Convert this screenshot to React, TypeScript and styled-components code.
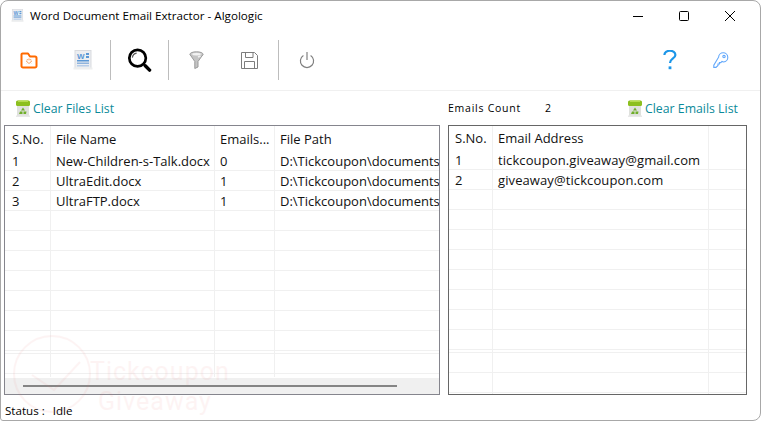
import React from "react";
import styled, { createGlobalStyle } from "styled-components";

const GlobalStyle = createGlobalStyle`
  html, body { margin: 0; padding: 0; background: #fff; }
  body { font-family: "Open Sans", "Noto Sans", sans-serif; color: #000; }
`;

const files = [
  ["1", "New-Children-s-Talk.docx", "0", "D:\\Tickcoupon\\documents"],
  ["2", "UltraEdit.docx", "1", "D:\\Tickcoupon\\documents"],
  ["3", "UltraFTP.docx", "1", "D:\\Tickcoupon\\documents"],
];

const emails = [
  ["1", "tickcoupon.giveaway@gmail.com"],
  ["2", "giveaway@tickcoupon.com"],
];

// row heights of the empty grid, the short row is how the grid really looks
const leftRows = [20, 20, 20, 20, 20, 20, 20, 20, 20, 20, 3, 20, 20];
const rightRows = [20, 20, 20, 20, 20, 20, 20, 20, 20, 20, 3, 20, 20, 20];
const leftCols = [46, 164, 60];
const rightCols = [44, 216, 52];

const DocIcon = ({ size = 20 }: { size?: number }) => (
  <svg width={size} height={size} viewBox="0 0 20 20">
    <rect x="2" y="0.5" width="16" height="18" fill="#eceef1" stroke="#d9dbdf" />
    <rect x="0.5" y="17.5" width="19" height="2" fill="#eeefef" />
    <text x="4" y="9" fontSize="8" fontWeight="700" fontFamily="Liberation Sans" fill="#5b98d6">W</text>
    <rect x="13" y="3" width="3" height="2" fill="#5b98d6" />
    <rect x="13" y="6" width="3" height="2" fill="#5b98d6" />
    <rect x="4" y="10" width="12" height="1.5" fill="#5b98d6" />
    <rect x="4" y="12.5" width="12" height="1.5" fill="#8fb4dd" />
    <rect x="4" y="15" width="12" height="1.5" fill="#b7cde8" />
  </svg>
);

const FolderIcon = () => (
  <svg width="18" height="17" viewBox="0 0 18 17" fill="none">
    <path
      d="M2.5 1.5H8L10 4.5H15A1.5 1.5 0 0 1 16.5 6V14A1.5 1.5 0 0 1 15 15.5H3A1.5 1.5 0 0 1 1.5 14V2.5A1 1 0 0 1 2.5 1.5Z"
      stroke="#ff6a00"
      strokeWidth="2"
      strokeLinejoin="round"
    />
    <path
      d="M9 6.5V8M9 10.5V12M6 9.2H7.5M10.5 9.2H12M7 7.2L8 8.2M10 10.2L11 11.2M11 7.2L10 8.2M8 10.2L7 11.2"
      stroke="#f4934c"
      strokeWidth="1"
    />
  </svg>
);

const SearchIcon = () => (
  <svg width="25" height="25" viewBox="0 0 26 26" fill="none">
    <circle cx="11" cy="10.5" r="8.6" stroke="#000" strokeWidth="2.8" />
    <path d="M5.6 10A5.4 5.4 0 0 1 10 5.4" stroke="#555" strokeWidth="1.2" />
    <path d="M17.5 17L19 18.5" stroke="#000" strokeWidth="1.6" />
    <path d="M19 18.5L23.5 23" stroke="#000" strokeWidth="3.6" strokeLinecap="round" />
  </svg>
);

const FunnelIcon = () => (
  <svg width="15" height="19" viewBox="0 0 15 19" fill="none">
    <ellipse cx="7.5" cy="3.2" rx="6.5" ry="2.4" fill="#d2d2d2" stroke="#9a9a9a" />
    <path d="M1 3.5L5.8 10.5V17.5L9 16V10.5L14 3.5" fill="#c4c4c4" stroke="#9a9a9a" />
    <path d="M9 6L11.5 5" stroke="#efefef" strokeWidth="1.5" />
    <ellipse cx="7.5" cy="3.2" rx="4.2" ry="1.2" fill="#f2f2f2" />
  </svg>
);

const SaveIcon = () => (
  <svg width="17" height="17" viewBox="0 0 17 17" fill="none" stroke="#7d7d7d" strokeWidth="1">
    <path d="M0.5 0.5H13.5L16.5 3.5V16.5H0.5Z" />
    <path d="M4.5 0.5V5.5H12V0.5" />
    <path d="M3.5 16.5V9.5H13.5V16.5" />
  </svg>
);

const PowerIcon = () => (
  <svg width="16" height="18" viewBox="0 0 16 18" fill="none" stroke="#808080" strokeWidth="1.2">
    <path d="M8 1V9" />
    <path d="M4.4 4.4A6.6 6.6 0 1 0 11.6 4.4" />
  </svg>
);

const HelpIcon = () => (
  <svg width="14" height="20" viewBox="0 0 14 20" fill="none">
    <path
      d="M1.4 5A5.4 4.2 0 0 1 12.4 5C12.4 8.4 7 8.6 7 13"
      stroke="#1c96e8"
      strokeWidth="2.2"
    />
    <rect x="5.6" y="16.4" width="2.8" height="2.8" fill="#1c96e8" />
  </svg>
);

const KeyIcon = () => (
  <svg width="16" height="16" viewBox="0 0 16 16" fill="none" stroke="#62a8fb" strokeWidth="1.1">
    <path d="M5.6 5.2A4.6 4.6 0 1 1 10.6 10L9 9.4L7.8 10.6H6.4V12H5V13.4L3 15.4H0.8V13.2Z" />
    <circle cx="11" cy="4.6" r="1.2" />
  </svg>
);

const BinIcon = () => (
  <svg width="16" height="17" viewBox="0 0 16 17">
    <rect x="2" y="5" width="12" height="11" fill="#dfe1dd" />
    <rect x="1" y="15.5" width="14" height="1.5" fill="#e8e8e8" />
    <rect x="1" y="0.5" width="14" height="5.5" rx="1.5" fill="#8cbf1f" />
    <rect x="3" y="0.5" width="10" height="1.5" fill="#b5dc4e" />
    <path d="M8 7.5L10 10.5H6ZM5 11.5H7.5V14H4ZM8.5 11.5H11.5L11 14H8.5Z" fill="#6fae2a" />
  </svg>
);

const WindowMinIcon = () => (
  <svg width="10" height="10" viewBox="0 0 10 10">
    <path d="M0 5.5H10" stroke="#000" strokeWidth="1" />
  </svg>
);

const WindowMaxIcon = () => (
  <svg width="10" height="10" viewBox="0 0 10 10" fill="none">
    <rect x="0.5" y="0.5" width="9" height="9" rx="1" stroke="#000" strokeWidth="1" />
  </svg>
);

const WindowCloseIcon = () => (
  <svg width="10" height="10" viewBox="0 0 10 10">
    <path d="M0 0L10 10M10 0L0 10" stroke="#000" strokeWidth="1" />
  </svg>
);

const App: React.FC = () => {
  return (
    <Frame>
      <GlobalStyle />
      <TitleBar>
        <TitleIcon>
          <DocIcon size={13} />
        </TitleIcon>
        <TitleText>Word Document Email Extractor - Algologic</TitleText>
        <WindowControls>
          <WindowButton><WindowMinIcon /></WindowButton>
          <WindowButton><WindowMaxIcon /></WindowButton>
          <WindowButton><WindowCloseIcon /></WindowButton>
        </WindowControls>
      </TitleBar>

      <Toolbar>
        <ToolButton $w={54}><FolderIcon /></ToolButton>
        <ToolButton $w={53}><DocIcon /></ToolButton>
        <Separator />
        <ToolButton $w={55}><SearchIcon /></ToolButton>
        <Separator />
        <ToolButton $w={52}><FunnelIcon /></ToolButton>
        <ToolButton $w={55}><SaveIcon /></ToolButton>
        <Separator />
        <ToolButton $w={54}><PowerIcon /></ToolButton>
        <ToolSpacer />
        <ToolButton $w={51}><HelpIcon /></ToolButton>
        <ToolButton $w={51}><KeyIcon /></ToolButton>
      </Toolbar>

      <ActionRow>
        <ClearLink>
          <BinIcon />
          <span>Clear Files List</span>
        </ClearLink>
        <CountGroup>
          <CountLabel>Emails Count</CountLabel>
          <CountValue>2</CountValue>
          <ClearLink>
            <BinIcon />
            <span>Clear Emails List</span>
          </ClearLink>
        </CountGroup>
      </ActionRow>

      <Panels>
        <ListBox $border="#85858d">
          <HeaderRow $h={25}>
            <Cell $w={leftCols[0]} $pad={7}>S.No.</Cell>
            <Cell $w={leftCols[1]} $pad={5}>File Name</Cell>
            <Cell $w={leftCols[2]} $pad={5}>Emails...</Cell>
            <LastCell $pad={5}>File Path</LastCell>
          </HeaderRow>
          <Rows>
            {leftRows.map((h, i) => {
              const f = files[i];
              return (
                <Row key={i} $h={h}>
                  <Cell $w={leftCols[0]} $pad={7}>{f?.[0]}</Cell>
                  <Cell $w={leftCols[1]} $pad={5}>{f?.[1]}</Cell>
                  <Cell $w={leftCols[2]} $pad={5}>{f?.[2]}</Cell>
                  <LastCell $pad={5}>{f?.[3]}</LastCell>
                </Row>
              );
            })}
          </Rows>
          <ScrollTrack>
            <ScrollThumb />
          </ScrollTrack>
        </ListBox>

        <ListBox $border="#666666">
          <HeaderRow $h={24}>
            <Cell $w={rightCols[0]} $pad={6}>S.No.</Cell>
            <Cell $w={rightCols[1]} $pad={5}>Email Address</Cell>
            <LastCell $pad={5} />
          </HeaderRow>
          <Rows>
            {rightRows.map((h, i) => {
              const e = emails[i];
              return (
                <Row key={i} $h={h}>
                  <Cell $w={rightCols[0]} $pad={6}>{e?.[0]}</Cell>
                  <EmailCell $w={rightCols[1]} $pad={5}>{e?.[1]}</EmailCell>
                  <LastCell $pad={5} />
                </Row>
              );
            })}
          </Rows>
        </ListBox>
      </Panels>

      <StatusBar>
        <span>Status :</span>
        <span>Idle</span>
      </StatusBar>

      <Watermark>
        <svg width="80" height="80" viewBox="0 0 80 80" fill="none" stroke="#e87878" strokeWidth="2">
          <circle cx="40" cy="40" r="38" />
          <path d="M20 41L42 56L68 28" />
        </svg>
        <WatermarkText>
          <WatermarkLine>Tickcoupon</WatermarkLine>
          <WatermarkLine $indent={8}>Giveaway</WatermarkLine>
        </WatermarkText>
      </Watermark>
    </Frame>
  );
};

const Frame = styled.div`
  position: relative;
  box-sizing: border-box;
  width: 761px;
  height: 421px;
  overflow: hidden;
  display: flex;
  flex-direction: column;
  background: #fff;
  border: 1px solid #a8a8a8;
  border-radius: 8px 8px 8px 3px;
`;

const TitleBar = styled.div`
  display: flex;
  align-items: center;
  height: 29px;
  flex: none;
`;

const TitleIcon = styled.div`
  display: flex;
  margin: 0 6px 0 10px;
`;

const TitleText = styled.div`
  font-size: 11.65px;
  color: #000;
  white-space: nowrap;
`;

const WindowControls = styled.div`
  margin-left: auto;
  margin-right: 7px;
  display: flex;
`;

const WindowButton = styled.div`
  width: 46px;
  height: 29px;
  display: flex;
  align-items: center;
  justify-content: center;
`;

const Toolbar = styled.div`
  display: flex;
  align-items: center;
  height: 61px;
  flex: none;
  padding: 0 14px 0 1px;
  box-sizing: border-box;
  border-bottom: 1px solid #f0f0f0;
`;

const ToolButton = styled.div<{ $w: number }>`
  width: ${({ $w }) => $w}px;
  height: 40px;
  display: flex;
  align-items: center;
  justify-content: center;
`;

const ToolSpacer = styled.div`
  flex: 1;
`;

const Separator = styled.div`
  width: 1px;
  height: 40px;
  background: #bdbdbd;
  margin: 0 1px;
`;

const ActionRow = styled.div`
  display: flex;
  align-items: center;
  height: 34px;
  flex: none;
  padding: 0 21px 0 14px;
  justify-content: space-between;
`;

const ClearLink = styled.div`
  display: flex;
  align-items: center;
  gap: 2px;
  font-size: 12.3px;
  line-height: 15px;
  color: #0b8a9a;
  white-space: nowrap;
`;

const CountGroup = styled.div`
  display: flex;
  align-items: center;
  width: 291px;
`;

const CountLabel = styled.div`
  font-size: 10.5px;
  letter-spacing: 0.75px;
  width: 97px;
`;

const CountValue = styled.div`
  font-size: 10.5px;
  width: 82px;
`;

const Panels = styled.div`
  display: grid;
  grid-template-columns: 436px 299px;
  column-gap: 8px;
  height: 270px;
  flex: none;
  padding-left: 3px;
`;

const ListBox = styled.div<{ $border: string }>`
  box-sizing: border-box;
  border: 1px solid ${({ $border }) => $border};
  display: flex;
  flex-direction: column;
  overflow: hidden;
  font-size: 13px;
  color: #111;
`;

const Rows = styled.div`
  flex: 1;
  min-height: 0;
  overflow: hidden;
`;

const Row = styled.div<{ $h: number }>`
  display: flex;
  box-sizing: border-box;
  height: ${({ $h }) => $h}px;
  line-height: 20px;
  border-bottom: 1px solid #f0f0f0;
  overflow: hidden;
`;

const HeaderRow = styled(Row)`
  border-bottom: none;
  line-height: ${({ $h }) => $h + 1}px;
  flex: none;
`;

const Cell = styled.div<{ $w: number; $pad: number }>`
  box-sizing: border-box;
  flex: none;
  width: ${({ $w }) => $w}px;
  padding-left: ${({ $pad }) => $pad}px;
  border-right: 1px solid #f0f0f0;
  white-space: nowrap;
  overflow: hidden;
`;

const EmailCell = styled(Cell)`
  letter-spacing: 0.1px;
`;

const LastCell = styled.div<{ $pad: number }>`
  flex: 1;
  min-width: 0;
  padding-left: ${({ $pad }) => $pad}px;
  white-space: nowrap;
  overflow: hidden;
`;

const ScrollTrack = styled.div`
  flex: none;
  height: 16px;
  margin-top: 1px;
  background: #f0f0f0;
  display: flex;
  align-items: center;
  padding-left: 18px;
`;

const ScrollThumb = styled.div`
  width: 374px;
  height: 2px;
  background: #858585;
`;

const StatusBar = styled.div`
  display: flex;
  flex: 1;
  align-items: flex-end;
  gap: 8px;
  padding: 0 0 2px 4px;
  font-size: 11.6px;
  line-height: 15px;
`;

const Watermark = styled.div`
  position: absolute;
  left: 11px;
  top: 333px;
  display: flex;
  gap: 0;
  opacity: 0.08;
  pointer-events: none;
`;

const WatermarkText = styled.div`
  display: flex;
  flex-direction: column;
  margin-top: 23px;
  margin-left: -2px;
  color: #e87878;
  white-space: nowrap;
`;

const WatermarkLine = styled.div<{ $indent?: number }>`
  height: 30px;
  font-family: Roboto, sans-serif;
  font-size: 25px;
  letter-spacing: 1px;
  line-height: 30px;
  margin-left: ${({ $indent }) => $indent ?? 0}px;
`;

export default App;
